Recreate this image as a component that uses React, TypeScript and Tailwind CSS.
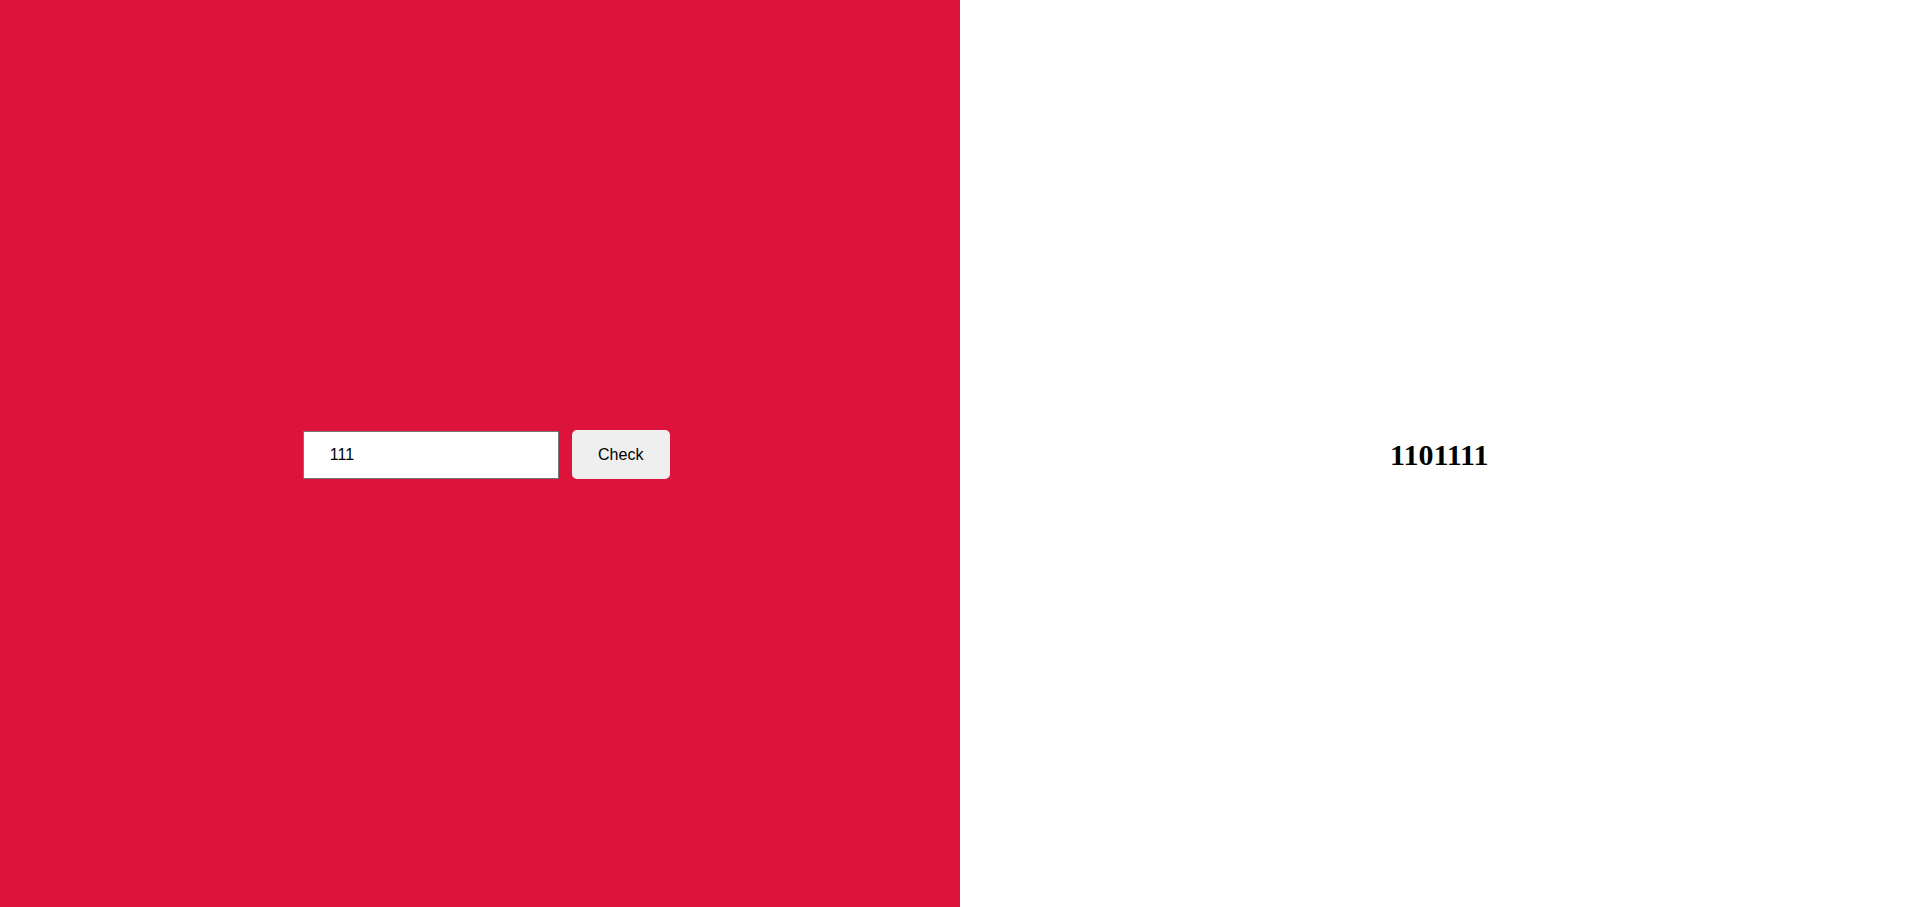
import { useState } from "react";

export default function App() {
  const [value, setValue] = useState("111");
  const [result, setResult] = useState("1101111");

  const check = () => {
    const n = parseInt(value, 10);
    setResult(isNaN(n) ? "" : n.toString(2));
  };

  return (
    <div className="flex h-[907px] w-full">
      {/* left side: input form */}
      <div className="flex w-1/2 items-center justify-center gap-[13px] bg-[#dc143c] pl-[13px] pt-[2px]">
        <input
          value={value}
          onChange={(e) => setValue(e.target.value)}
          className="h-[48px] w-[256px] border border-[#767676] bg-white pl-[26px] text-[16px] text-black outline-none"
          style={{ fontFamily: '"Liberation Sans", Arial, sans-serif' }}
        />
        <button
          onClick={check}
          className="h-[49px] w-[98px] rounded-[5px] bg-[#efefef] text-[16px] text-black"
          style={{ fontFamily: '"Liberation Sans", Arial, sans-serif' }}
        >
          Check
        </button>
      </div>

      {/* right side: result */}
      <div className="flex w-1/2 items-center justify-center bg-white pt-[2px]">
        <h1 className="text-[30px] font-bold text-black" style={{ fontFamily: '"Liberation Serif", "Times New Roman", serif' }}>
          {result}
        </h1>
      </div>
    </div>
  );
}
